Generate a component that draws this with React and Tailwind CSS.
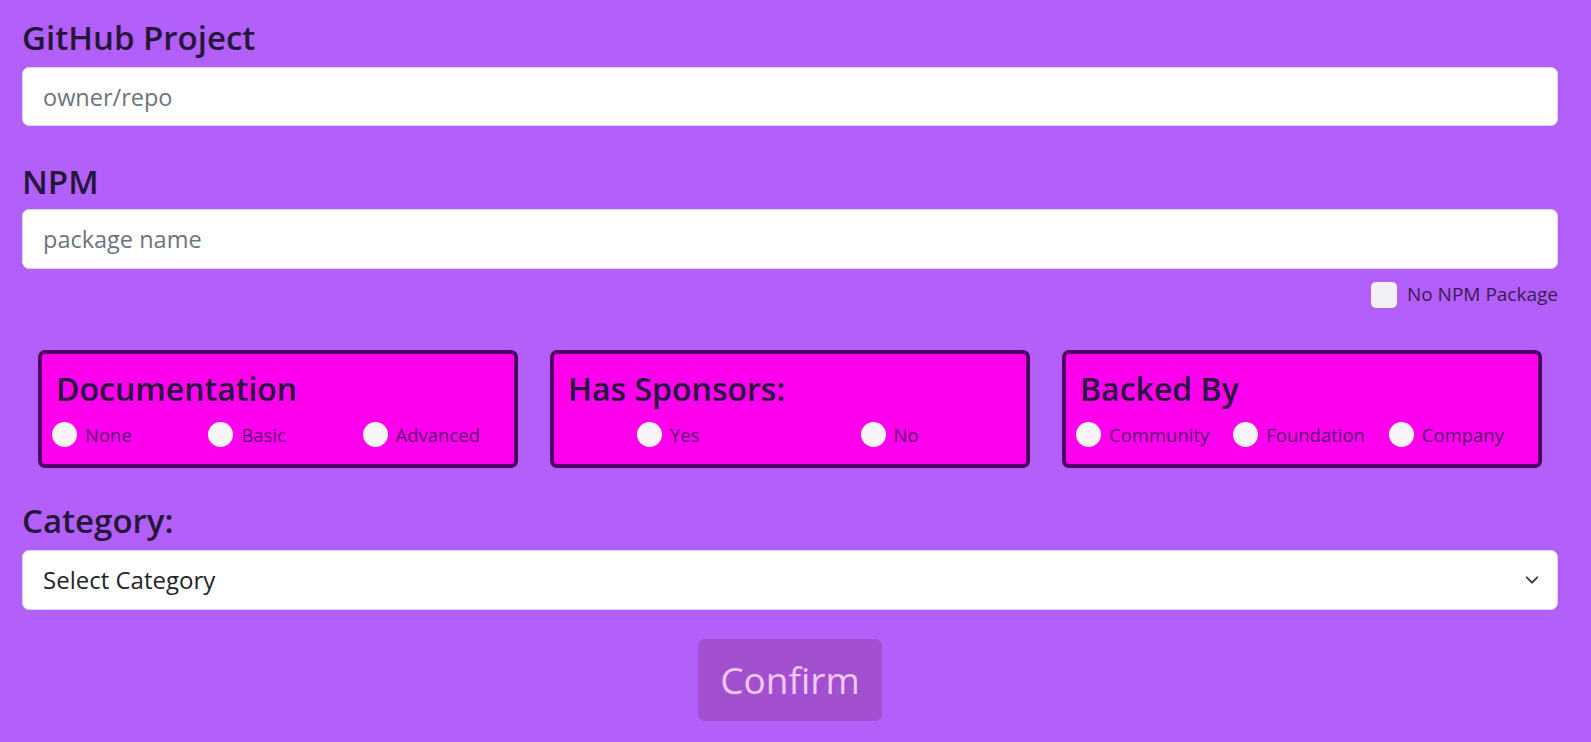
import React from "react";

const font = { fontFamily: '"Open Sans", "Noto Sans", sans-serif' };

function Radio({ name, label }) {
  return (
    <label className="flex items-center gap-[8px] cursor-pointer">
      <input
        type="radio"
        name={name}
        className="appearance-none w-[25px] h-[25px] rounded-full bg-[#f7f5f8] shrink-0 m-0"
      />
      <span className="text-[18.5px] leading-[25px] text-[#5a0a6e]">{label}</span>
    </label>
  );
}

function Box({ title, name, options, rowClass }) {
  return (
    <div className="mx-4 h-[118px] border-4 border-[#500064] rounded-[7px] bg-[#ff00ee] flex flex-col">
      <div className="pl-[14px] pt-[15px] text-[32px] leading-[40px] font-semibold text-[#2a1540]">
        {title}
      </div>
      <div className={`flex mt-[13px] ${rowClass}`}>
        {options.map((o) => (
          <Radio key={o} name={name} label={o} />
        ))}
      </div>
    </div>
  );
}

export default function App() {
  return (
    <div className="min-h-screen w-full bg-[#b35ffa]" style={font}>
      <div className="pl-[22px] pr-[33px] pt-[19px]">
        <div className="text-[33px] leading-[38px] font-semibold text-[#26173a] mb-[10px]">
          GitHub Project
        </div>
        <input
          type="text"
          placeholder="owner/repo"
          className="block w-full h-[59px] px-[20px] text-[23.5px] bg-white border border-[#dcd6e3] rounded-[7px] text-[#212529] placeholder:text-[#6c757d] outline-none"
        />
        <div className="text-[33px] leading-[38px] font-semibold text-[#26173a] mt-[37px] mb-[8px]">
          NPM
        </div>
        <input
          type="text"
          placeholder="package name"
          className="block w-full h-[60px] px-[20px] text-[23.5px] bg-white border border-[#dcd6e3] rounded-[7px] text-[#212529] placeholder:text-[#6c757d] outline-none"
        />
        <div className="flex justify-end items-center gap-[10px] mt-[13px] h-[25px]">
          <input
            type="checkbox"
            className="appearance-none w-[26px] h-[26px] rounded-[5px] bg-[#f3f0f7] m-0"
          />
          <span className="text-[19px] leading-[25px] text-[#3a1a56]">No NPM Package</span>
        </div>
      </div>

      <div className="pl-[22px] pr-[33px] mt-[43px] grid grid-cols-3">
        <Box
          title="Documentation"
          name="doc"
          options={["None", "Basic", "Advanced"]}
          rowClass="justify-between pl-[10px] pr-[34px]"
        />
        <Box
          title="Has Sponsors:"
          name="sponsors"
          options={["Yes", "No"]}
          rowClass="pl-[83px] gap-[161px]"
        />
        <Box
          title="Backed By"
          name="backed"
          options={["Community", "Foundation", "Company"]}
          rowClass="justify-between pl-[10px] pr-[34px]"
        />
      </div>

      <div className="pl-[22px] pr-[33px]">
        <div className="text-[33px] leading-[38px] font-semibold text-[#26173a] mt-[34px] mb-[10px]">
          Category:
        </div>
        <div className="flex items-center w-full h-[60px] pl-[20px] pr-[16px] text-[24px] bg-white border border-[#dcd6e3] rounded-[7px] text-[#212529]">
          <span className="flex-1">Select Category</span>
          <svg width="18" height="14" viewBox="0 0 16 16" fill="none">
            <path
              d="M2 5l6 6 6-6"
              stroke="#343a40"
              strokeWidth="2.2"
              strokeLinecap="round"
              strokeLinejoin="round"
            />
          </svg>
        </div>
        <div className="flex justify-center mt-[29px] pb-[20px]">
          <button
            type="button"
            className="px-[22px] py-[13px] text-[37px] leading-[56px] rounded-[7px] bg-[#a350d0] text-[#f0c8fa]"
          >
            Confirm
          </button>
        </div>
      </div>
    </div>
  );
}
